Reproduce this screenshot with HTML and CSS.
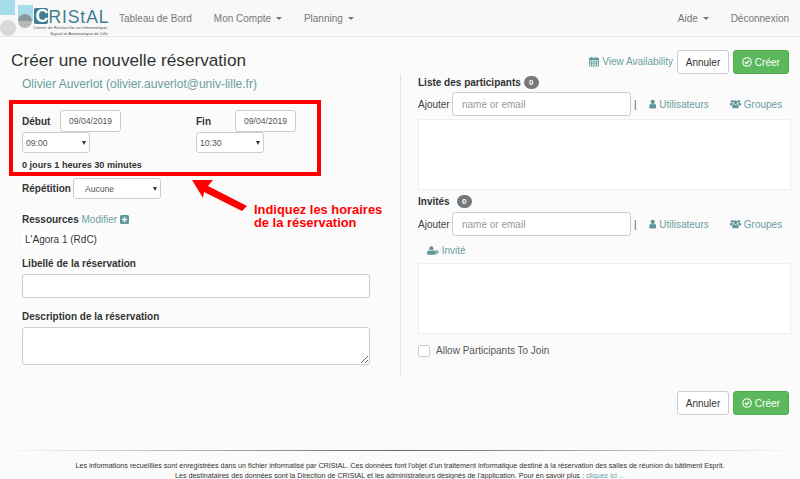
FILE: index.html
```html
<!DOCTYPE html>
<html lang="fr">
<head>
<meta charset="utf-8">
<title>Créer une nouvelle réservation</title>
<link rel="stylesheet" href="styles.css">
</head>
<body>
<svg class="defs" width="0" height="0" aria-hidden="true">
  <symbol id="i-user" viewBox="0 0 12 14"><circle cx="6" cy="3.6" r="3.4"/><path d="M0.3 12.2C0.3 8.8 1.6 6.6 3.4 6.4 4.1 7 5 7.4 6 7.4S7.9 7 8.6 6.4C10.4 6.6 11.7 8.8 11.7 12.2 11.7 13.3 11 14 10 14H2C1 14 .3 13.3.3 12.2Z"/></symbol>
  <symbol id="i-users" viewBox="0 0 18 14"><circle cx="9" cy="4" r="3.2"/><circle cx="3.6" cy="2.6" r="2.2"/><circle cx="14.4" cy="2.6" r="2.2"/><path d="M3.8 12.4C3.8 9.4 4.8 7.4 6.4 7.2 7 7.8 8 8.2 9 8.2S11 7.8 11.6 7.2C13.2 7.4 14.2 9.4 14.2 12.4 14.2 13.4 13.6 14 12.6 14H5.4C4.4 14 3.8 13.4 3.8 12.4Z"/><path d="M0 7.6C0 6 .6 5 1.6 5 2.4 5.6 3.4 5.8 4.4 5.4 4.4 6 4.6 6.4 5 6.8 3.8 7.4 3 8.6 2.8 10H1.2C.5 10 0 9.2 0 7.6Z"/><path d="M18 7.6C18 6 17.4 5 16.4 5 15.6 5.6 14.6 5.8 13.6 5.4 13.6 6 13.4 6.4 13 6.8 14.2 7.4 15 8.6 15.2 10H16.8C17.5 10 18 9.2 18 7.6Z"/></symbol>
  <symbol id="i-user-plus" viewBox="0 0 18 13"><circle cx="6.5" cy="3.4" r="3.2"/><path d="M0 11C0 8 1.2 6.2 3 6 3.8 6.6 5.4 7.2 6.5 7.2S9.2 6.6 10 6C11.8 6.2 13 8 13 11 13 12.2 12.2 13 11.2 13H1.8C.8 13 0 12.2 0 11Z"/><path d="M14 5.5H15.6V8H18V9.6H15.6V12H14V9.6H11.6V8H14Z"/></symbol>
  <symbol id="i-plus" viewBox="0 0 12 12"><path fill-rule="evenodd" d="M2 0H10A2 2 0 0 1 12 2V10A2 2 0 0 1 10 12H2A2 2 0 0 1 0 10V2A2 2 0 0 1 2 0ZM5 2.5V5H2.5V7H5V9.5H7V7H9.5V5H7V2.5Z"/></symbol>
  <symbol id="i-cal" viewBox="0 0 13 13"><path fill-rule="evenodd" d="M1 1.6H3V.4H4V1.6H9V.4H10V1.6H12C12.6 1.6 13 2 13 2.6V12C13 12.6 12.6 13 12 13H1C.4 13 0 12.6 0 12V2.6C0 2 .4 1.6 1 1.6ZM1 4.6V6.4H3V4.6ZM4 4.6V6.4H6V4.6ZM7 4.6V6.4H9V4.6ZM10 4.6V6.4H12V4.6ZM1 7.4V9.2H3V7.4ZM4 7.4V9.2H6V7.4ZM7 7.4V9.2H9V7.4ZM10 7.4V9.2H12V7.4ZM1 10.2V12H3V10.2ZM4 10.2V12H6V10.2ZM7 10.2V12H9V10.2ZM10 10.2V12H12V10.2Z"/></symbol>
  <symbol id="i-check" viewBox="0 0 14 14"><circle cx="7" cy="7" r="5.9" fill="none" stroke="currentColor" stroke-width="1.6"/><path d="M4.2 7L6.3 9.1 9.9 5.2" fill="none" stroke="currentColor" stroke-width="1.7"/></symbol>
</svg>

<nav class="navbar">
  <svg class="logo" width="110" height="36" viewBox="0 0 110 36" role="img" aria-label="CRIStAL">
    <rect x="0" y="0" width="15" height="15" fill="#a6dcec"/>
    <circle cx="8" cy="28" r="8" fill="#d8d8d8"/>
    <rect x="18" y="5" width="15" height="16" fill="#a6dcec"/>
    <path d="M18 21A7 7 0 0 1 32 21Z" fill="#8d9698"/>
    <path d="M18 21A7 7 0 0 0 32 21Z" fill="#b8b8b8"/>
    <rect x="34" y="8" width="14" height="16" rx="2" fill="#3f7f90"/>
    <text class="logo-c" x="35.5" y="22">C</text>
    <text class="logo-name" x="48.5" y="22.5">RIStAL</text>
    <text class="logo-sub" x="108" y="29" text-anchor="end">Centre de Recherche en Informatique,</text>
    <text class="logo-sub" x="108" y="35" text-anchor="end">Signal et Automatique de Lille</text>
  </svg>
  <ul class="nav-list nav-left">
    <li>Tableau de Bord</li>
    <li>Mon Compte <span class="caret"></span></li>
    <li>Planning <span class="caret"></span></li>
  </ul>
  <ul class="nav-list nav-right">
    <li>Aide <span class="caret"></span></li>
    <li>Déconnexion</li>
  </ul>
</nav>

<main class="page">
  <header class="head">
    <h1>Créer une nouvelle réservation</h1>
    <div class="actions">
      <a class="link avail"><svg class="ic ic13"><use href="#i-cal"/></svg> View Availability</a>
      <button class="btn">Annuler</button>
      <button class="btn btn-ok"><svg class="ic ic14"><use href="#i-check"/></svg> Créer</button>
    </div>
  </header>

  <div class="cols">
    <section class="col-left">
      <div class="owner">Olivier Auverlot (olivier.auverlot@univ-lille.fr)</div>
      <div class="dates">
        <div class="date-group">
          <div class="date-row"><label class="lbl lbl-debut">Début</label><input class="ctl date" value="09/04/2019"></div>
          <div class="sel sel-time">09:00</div>
        </div>
        <div class="date-group">
          <div class="date-row"><label class="lbl lbl-fin">Fin</label><input class="ctl date" value="09/04/2019"></div>
          <div class="sel sel-time">10:30</div>
        </div>
      </div>
      <div class="duration">0 jours 1 heures 30 minutes</div>
      <div class="repeat"><label class="lbl">Répétition</label><div class="sel sel-rep">Aucune</div></div>
      <div class="res-title"><span class="lbl">Ressources</span> <a class="link">Modifier</a> <svg class="ic ic10"><use href="#i-plus"/></svg></div>
      <div class="res-item">L'Agora 1 (RdC)</div>
      <label class="lbl block lib">Libellé de la réservation</label>
      <input class="ctl wide">
      <label class="lbl block desc">Description de la réservation</label>
      <textarea class="ctl wide area"></textarea>
    </section>

    <section class="col-right">
      <div class="sec-title"><span class="lbl">Liste des participants</span><span class="badge">0</span></div>
      <div class="add-row">
        <span class="add">Ajouter</span><input class="ctl who" placeholder="name or email"><span class="pipe">|</span>
        <a class="link users"><svg class="ic ic-u"><use href="#i-user"/></svg> Utilisateurs</a>
        <a class="link groups"><svg class="ic ic-g"><use href="#i-users"/></svg> Groupes</a>
      </div>
      <div class="box"></div>
      <div class="sec-title second"><span class="lbl">Invités</span><span class="badge badge-2">0</span></div>
      <div class="add-row add-row-2">
        <span class="add">Ajouter</span><input class="ctl who" placeholder="name or email"><span class="pipe">|</span>
        <a class="link users"><svg class="ic ic-u"><use href="#i-user"/></svg> Utilisateurs</a>
        <a class="link groups"><svg class="ic ic-g"><use href="#i-users"/></svg> Groupes</a>
      </div>
      <a class="link guest"><svg class="ic ic-p"><use href="#i-user-plus"/></svg> Invité</a>
      <div class="box"></div>
      <label class="join"><span class="check"></span>Allow Participants To Join</label>
    </section>
  </div>

  <div class="bottom-actions">
    <button class="btn">Annuler</button>
    <button class="btn btn-ok"><svg class="ic ic14"><use href="#i-check"/></svg> Créer</button>
  </div>
</main>

<footer class="foot">
  <hr class="rule">
  <p>Les informations recueillies sont enregistrées dans un fichier informatisé par CRIStAL. Ces données font l'objet d'un traitement informatique destiné à la réservation des salles de réunion du bâtiment Esprit.</p>
  <p>Les destinataires des données sont la Direction de CRIStAL et les administrateurs désignés de l'application. Pour en savoir plus : <a class="link">cliquez ici ...</a></p>
</footer>

<div class="callout-box"></div>
<svg class="callout-arrow" width="60" height="36" viewBox="0 0 60 36" aria-hidden="true">
  <path d="M0 0L21 0 16 6 55 26 50 31 12 12 11 18Z" fill="#f00"/>
</svg>
<div class="callout-text">Indiquez les horaires<br>de la réservation</div>
</body>
</html>
```

FILE: styles.css
```css
* { box-sizing: border-box; }
html, body { margin: 0; height: 479px; overflow: hidden; }
body { position: relative; background: #fbfbfb; color: #333; font-family: "Liberation Sans", Arial, sans-serif; font-size: 10px; }
.defs { position: absolute; }

.navbar { display: flex; align-items: center; height: 37px; background: #f8f8f8; border-bottom: 1px solid #e7e7e7; }
.logo { flex: none; display: block; }
.logo-c { font: 700 18px "Liberation Sans", sans-serif; fill: #fff; }
.logo-name { font: 400 17.5px "Liberation Sans", sans-serif; letter-spacing: .9px; fill: #3f7f90; }
.logo-sub { font: 400 4.4px "Liberation Sans", sans-serif; fill: #555; }
.nav-list { display: flex; list-style: none; margin: 0; padding: 0; color: #777; font-size: 10px; }
.nav-list li { white-space: nowrap; }
.nav-left { margin-left: 9px; gap: 22px; }
.nav-right { margin-left: auto; gap: 22px; padding-right: 11px; }
.caret { display: inline-block; width: 0; height: 0; margin-left: 2px; vertical-align: 2px; border-top: 3px solid #777; border-left: 3px solid transparent; border-right: 3px solid transparent; }

.page { padding: 0 11px; }
.head { display: flex; justify-content: space-between; height: 37px; }
h1 { margin: 13px 0 0; font-size: 17.2px; line-height: 20px; font-weight: 400; color: #333; }
.actions { display: flex; align-items: flex-start; padding-top: 13px; }
.link { color: #6a9ea0; }
.avail { margin-top: 6px; margin-right: 4px; }
.ic { fill: #5d9799; display: inline-block; vertical-align: -2px; }
.ic13 { width: 10px; height: 11px; }
.ic14 { width: 10px; height: 10px; fill: #fff; color: #fff; vertical-align: -1px; }
.ic10 { width: 9px; height: 9px; vertical-align: -1px; }
.ic-u { width: 7.5px; height: 10px; vertical-align: -1px; }
.ic-g { width: 11px; height: 10px; vertical-align: -1px; }
.ic-p { width: 12px; height: 9px; vertical-align: -1px; }
.btn { width: 52px; height: 24px; padding: 0; font: 10px "Liberation Sans", sans-serif; color: #333; background: #fff; border: 1px solid #ccc; border-radius: 3px; }
.btn-ok { margin-left: 4px; width: 56px; color: #fff; background: #5cb85c; border-color: #4cae4c; white-space: nowrap; }

.cols { display: flex; margin: 0 -11px; }
.col-left { width: 400px; height: 302px; padding: 0 0 0 22px; }
.col-right { width: 400px; height: 302px; padding: 0 9px 0 17px; border-left: 1px solid #e3e3e3; }

.owner { height: 16px; margin-top: 2px; font-size: 12px; line-height: 16px; color: #6a9ea0; }
.lbl { font-weight: 700; color: #333; font-size: 10px; }
.block { display: block; }
.dates { display: flex; margin-top: 18px; }
.date-group { width: 174px; }
.date-row { display: flex; align-items: center; height: 22px; }
.lbl-debut { width: 38px; }
.lbl-fin { width: 39px; }
.ctl { font: 8.6px "Liberation Sans", sans-serif; color: #555; background: #fff; border: 1px solid #ccc; border-radius: 3px; outline: 0; }
.date { width: 61px; height: 22px; padding: 0 0 0 8px; }
.sel { position: relative; display: flex; align-items: center; font-size: 8.6px; color: #555; background: #fff; border: 1px solid #ccc; border-radius: 3px; }
.sel::after { content: ""; position: absolute; right: 3.5px; top: 50%; margin-top: -2px; border-top: 4px solid #333; border-left: 2.5px solid transparent; border-right: 2.5px solid transparent; }
.sel-time { width: 68px; height: 21px; padding-left: 3px; }
.duration { margin-top: 7px; height: 11px; line-height: 11px; font-size: 9.1px; font-weight: 700; }
.repeat { display: flex; align-items: center; margin-top: 7px; height: 21px; }
.repeat .lbl { width: 51px; }
.sel-rep { width: 88px; height: 21px; padding-left: 11px; }
.res-title { margin-top: 14px; line-height: 13px; height: 13px; font-size: 10px; }
.res-item { display: table; margin-top: 5px; padding: 0 3px; height: 18px; line-height: 18px; font-size: 10px; background: #fff; }
.lib { margin-top: 8px; line-height: 13px; }
.wide { display: block; width: 348px; height: 24px; margin-top: 4px; }
.desc { margin-top: 12px; line-height: 13px; }
.area { height: 38px; margin-top: 4px; resize: vertical; }

.sec-title { display: flex; align-items: center; height: 13px; margin-top: 2px; }
.badge { min-width: 15px; height: 13px; margin-left: 3px; border-radius: 7px; background: #777; color: #fff; font-size: 8px; font-weight: 700; line-height: 13px; text-align: center; }
.badge-2 { margin-left: 7px; }
.add-row { display: flex; align-items: center; height: 24px; margin-top: 3px; font-size: 10px; }
.add-row-2 { margin-top: 4px; }
.add { width: 34px; color: #444; }
.who { width: 179px; height: 24px; padding: 0 9px; font-size: 10px; }
.who::placeholder { color: #999; }
.pipe { margin-left: 3px; width: 15px; color: #555; }
.users { width: 81px; }
.box { width: 373px; height: 71px; margin-top: 3px; background: #fff; border: 1px solid #eee; }
.second { margin-top: 5px; }
.guest { display: block; margin: 8px 0 0 9px; height: 13px; line-height: 13px; font-size: 10px; }
.guest + .box { margin-top: 6px; }
.join { display: flex; align-items: center; margin-top: 10px; height: 13px; font-size: 10px; color: #555; }
.check { width: 12px; height: 12px; margin-right: 6px; background: #fff; border: 1px solid #ccc; border-radius: 2px; }

.bottom-actions { display: flex; justify-content: flex-end; margin-top: 15px; }
.foot { margin-top: 35px; text-align: center; font-size: 7.17px; line-height: 9.5px; color: #333; }
.rule { height: 1px; margin: 0 0 11px; border: 0; background: linear-gradient(to right, rgba(0,0,0,0), rgba(0,0,0,.6), rgba(0,0,0,0)); }
.foot p { margin: 0; }

.callout-box { position: absolute; left: 9px; top: 100px; width: 312px; height: 76px; border: 4px solid #f00; pointer-events: none; }
.callout-arrow { position: absolute; left: 192px; top: 180px; }
.callout-text { position: absolute; left: 254px; top: 203px; font-size: 12.9px; line-height: 13px; font-weight: 700; color: #f00; white-space: nowrap; }
```
